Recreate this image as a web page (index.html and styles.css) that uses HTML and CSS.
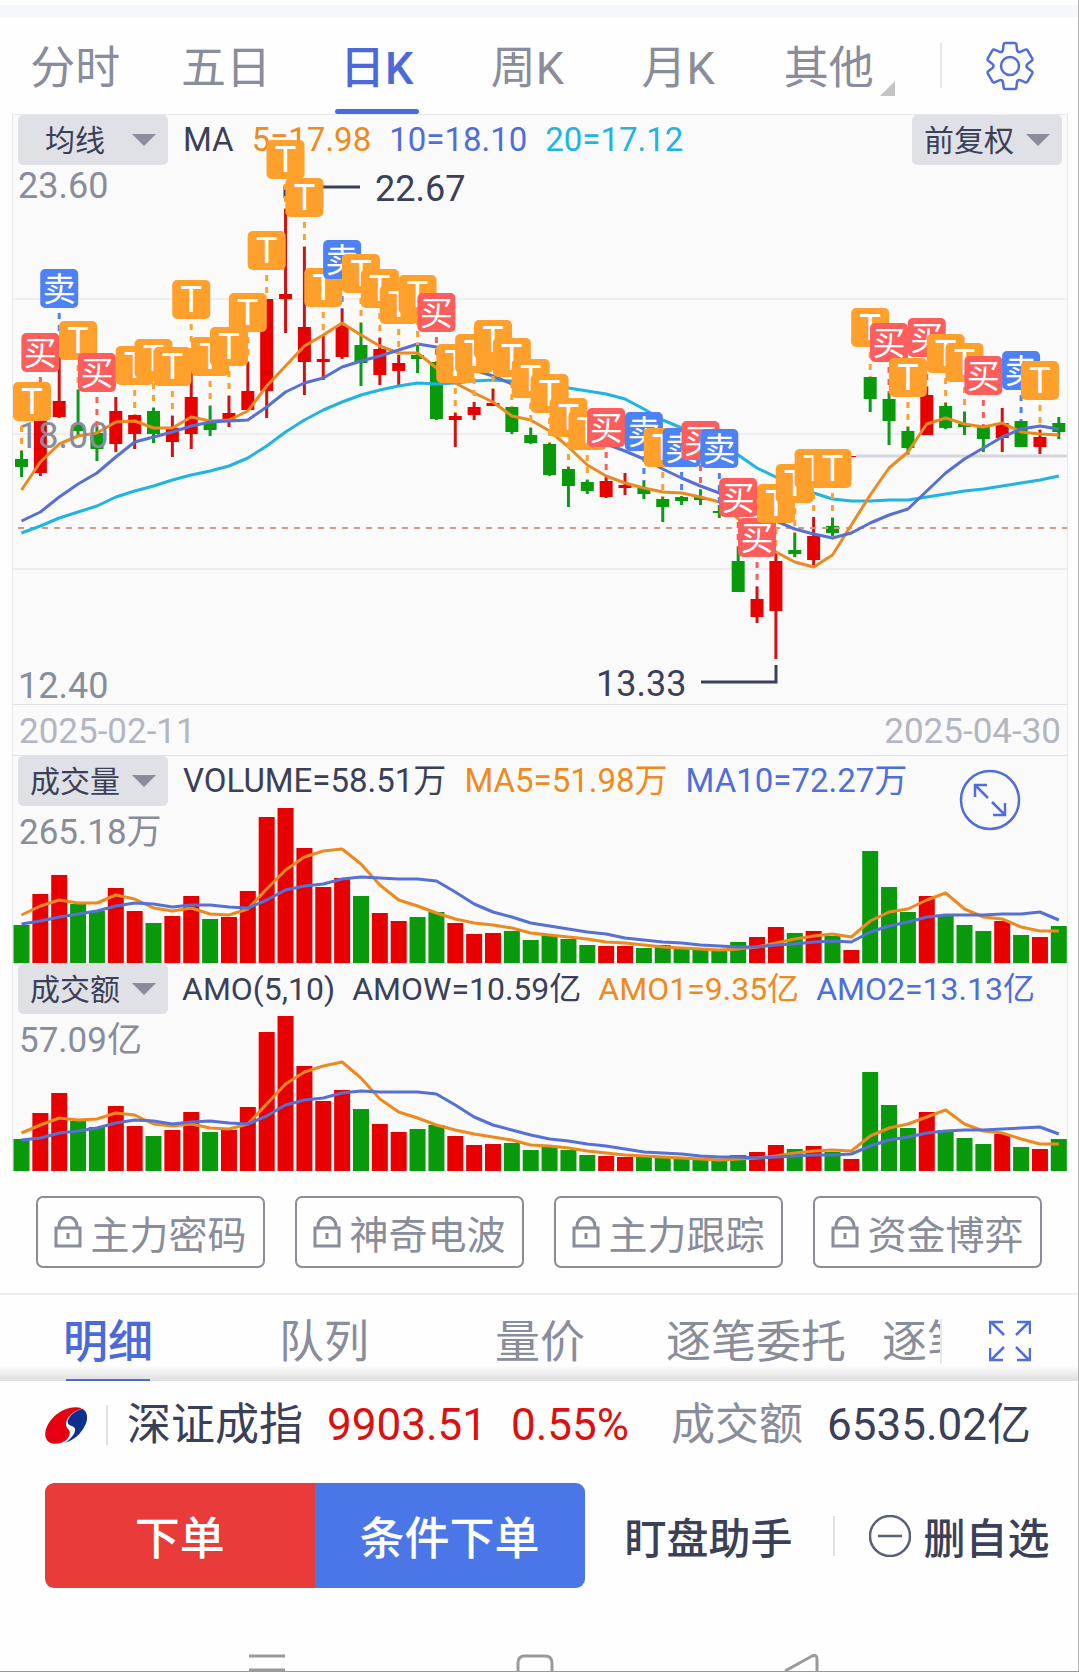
FILE: index.html
```html
<!DOCTYPE html>
<html lang="zh-CN">
<head>
    <meta charset="UTF-8">
    <meta name="viewport" content="width=device-width, initial-scale=1.0">
    <title>日K</title>
    <link rel="stylesheet" href="styles.css">
</head>
<body>
    <div class="strip"></div>

    <!-- 周期切换 -->
    <header class="period-bar">
        <nav class="periods">
            <a href="#" class="period">分时</a>
            <a href="#" class="period">五日</a>
            <a href="#" class="period active">日K</a>
            <a href="#" class="period">周K</a>
            <a href="#" class="period">月K</a>
            <a href="#" class="period more">其他</a>
        </nav>
        <button class="icon-btn" aria-label="设置">
            <svg width="52" height="52" viewBox="-26 -26 52 52" class="line-icon">
                <defs>
                    <path id="tooth" d="M-8.6 -14.2Q-7 -14.8 -7 -16.5L-6.4 -21.5Q-6.2 -23 -4.8 -23H4.8Q6.2 -23 6.4 -21.5L7 -16.5Q7 -14.8 8.6 -14.2"/>
                </defs>
                <use href="#tooth"/>
                <use href="#tooth" transform="rotate(60)"/>
                <use href="#tooth" transform="rotate(120)"/>
                <use href="#tooth" transform="rotate(180)"/>
                <use href="#tooth" transform="rotate(240)"/>
                <use href="#tooth" transform="rotate(300)"/>
                <circle r="9"/>
            </svg>
        </button>
    </header>

    <main class="charts">
        <!-- K线 -->
        <section class="chart">
            <svg id="kline" class="plot" viewBox="13 115 1054 589"></svg>
            <div class="legend">
                <label class="pill">
                    <select aria-label="主图指标"><option>均线</option></select>
                    <span class="arrow"></span>
                </label>
                <span class="dark">MA</span>
                <span class="orange">5=17.98</span>
                <span class="blue">10=18.10</span>
                <span class="cyan">20=17.12</span>
                <label class="pill right">
                    <select aria-label="复权方式"><option>前复权</option></select>
                    <span class="arrow"></span>
                </label>
            </div>
            <svg id="marks" class="plot" viewBox="13 115 1054 589"></svg>
        </section>

        <div class="dates">
            <span>2025-02-11</span>
            <span>2025-04-30</span>
        </div>

        <!-- 成交量 -->
        <section class="chart sub">
            <svg id="volume" class="plot" viewBox="13 0 1054 207"></svg>
            <div class="legend">
                <label class="pill">
                    <select aria-label="副图指标一"><option>成交量</option></select>
                    <span class="arrow"></span>
                </label>
                <span class="dark">VOLUME=58.51万</span>
                <span class="orange">MA5=51.98万</span>
                <span class="blue">MA10=72.27万</span>
            </div>
            <span class="axis-max">265.18万</span>
            <button class="icon-btn expand" aria-label="全屏">
                <svg width="62" height="62" viewBox="0 0 62 62" class="line-icon">
                    <circle cx="31" cy="31" r="29"/>
                    <path d="M16 28V16H28M16 16L29 29M46 34V46H34M46 46L33 33"/>
                </svg>
            </button>
        </section>

        <!-- 成交额 -->
        <section class="chart sub">
            <svg id="amount" class="plot" viewBox="13 0 1054 207"></svg>
            <div class="legend tight">
                <label class="pill">
                    <select aria-label="副图指标二"><option>成交额</option></select>
                    <span class="arrow"></span>
                </label>
                <span class="dark">AMO(5,10)</span>
                <span class="dark">AMOW=10.59亿</span>
                <span class="orange">AMO1=9.35亿</span>
                <span class="blue">AMO2=13.13亿</span>
            </div>
            <span class="axis-max">57.09亿</span>
        </section>
    </main>

    <svg width="0" height="0" class="sprite">
        <symbol id="lock" viewBox="0 0 28 32">
            <path d="M2 12H26V30H2ZM5 12V10A9 9 0 0 1 23 10V12M14 17V23"/>
        </symbol>
    </svg>

    <div class="locks">
        <button class="lock-btn"><svg width="28" height="32"><use href="#lock"/></svg>主力密码</button>
        <button class="lock-btn"><svg width="28" height="32"><use href="#lock"/></svg>神奇电波</button>
        <button class="lock-btn"><svg width="28" height="32"><use href="#lock"/></svg>主力跟踪</button>
        <button class="lock-btn"><svg width="28" height="32"><use href="#lock"/></svg>资金博弈</button>
    </div>

    <!-- 明细 -->
    <div class="detail-bar">
        <nav class="details">
            <a href="#" class="detail active">明细</a>
            <a href="#" class="detail">队列</a>
            <a href="#" class="detail">量价</a>
            <a href="#" class="detail">逐笔委托</a>
            <a href="#" class="detail">逐笔成交</a>
        </nav>
        <button class="icon-btn" aria-label="展开">
            <svg width="42" height="42" viewBox="0 0 42 42" class="line-icon">
                <path d="M1 14V2H14M2 2L15 15M28 2H41V14M40 2L27 15M1 28V40H14M2 40L15 27M28 40H41V28M40 40L27 27"/>
            </svg>
        </button>
    </div>

    <footer class="bottom">
        <div class="index">
            <svg width="42" height="38" viewBox="26 28 124 112" class="logo">
                <path fill="#e60012" d="M133 34C108 26 70 38 46 66C18 98 20 137 54 139C84 140 101 120 99 104C98 94 88 95 88 80C89 61 110 44 133 36Z"/>
                <path fill="#0a2f8f" d="M136 36C152 44 155 66 143 88C132 110 112 128 86 137C104 124 116 108 115 96C113 86 93 87 93 76C93 60 114 42 136 36Z"/>
            </svg>
            <span class="bar"></span>
            <span>深证成指</span>
            <span class="up">9903.51</span>
            <span class="up">0.55%</span>
            <span class="turnover">成交额</span>
            <span>6535.02亿</span>
        </div>

        <div class="actions">
            <div class="trade">
                <button class="btn-order">下单</button>
                <button class="btn-cond">条件下单</button>
            </div>
            <button class="btn-text">盯盘助手</button>
            <span class="bar"></span>
            <button class="btn-text">
                <svg width="42" height="42" viewBox="0 0 42 42">
                    <circle cx="21" cy="21" r="20"/>
                    <path d="M9 21H33"/>
                </svg>
                删自选
            </button>
        </div>
    </footer>

    <!-- 系统导航键 -->
    <div class="sys-nav">
        <svg viewBox="0 0 1078 17">
            <path d="M249 2H285M249 16H285"/>
            <path d="M518 17V9Q518 2 525 2H545Q552 2 552 9V17"/>
            <path d="M785 17L812 2Q817 0 817 5V17"/>
        </svg>
    </div>

    <script src="chart.js"></script>
</body>
</html>
```
FILE: styles.css
```css
* {
    box-sizing: border-box;
}
body {
    margin: 0;
    min-height: 100vh;
    display: flex;
    flex-direction: column;
    border-right: 1px solid #b4b4b8;
    border-bottom: 1px solid #9a9a9a;
    background-color: #fefefe;
    color: #3a4058;
    font-family: Roboto, "Noto Sans CJK SC", sans-serif;
    line-height: 1.2;
}
a {
    color: inherit;
    text-decoration: none;
}
button {
    padding: 0;
    border: none;
    background: none;
    color: inherit;
    font-family: inherit;
    cursor: pointer;
}
svg {
    display: block;
}
.strip {
    height: 12px;
    margin-top: 5px;
    background-color: #f6f7fa;
}
.icon-btn {
    display: flex;
    justify-content: center;
    align-items: center;
}
.line-icon {
    fill: none;
    stroke: #4f6edb;
    stroke-width: 2.5;
}

/* period tabs */
.period-bar {
    display: flex;
    height: 97px;
    align-items: center;
}
.periods {
    flex: 1;
    display: flex;
    height: 100%;
    padding-right: 36px;
}
.period {
    flex: 1;
    display: flex;
    justify-content: center;
    align-items: center;
    position: relative;
    padding-top: 6px;
    color: #888c9b;
    font-size: 45px;
}
.period.active, .detail.active {
    color: #4c69d9;
    font-weight: 500;
}
.period.active::after {
    content: "";
    position: absolute;
    bottom: 0;
    width: 84px;
    height: 5px;
    border-radius: 3px;
    background-color: #4c69d9;
}
.more::after {
    content: "";
    position: absolute;
    right: 9px;
    bottom: 18px;
    border-left: 15px solid transparent;
    border-bottom: 15px solid #c4c4c4;
}
.period-bar .icon-btn {
    width: 138px;
    height: 45px;
    border-left: 2px solid #e6e7eb;
}

/* charts */
.charts {
    margin: 0 10px 0 12px;
    border: 1px solid #e8e9ec;
    border-bottom: none;
    background-color: #fafafa;
}
.chart {
    display: grid;
    grid-template-rows: auto 1fr;
}
.sub {
    border-top: 1px solid #e0e1e5;
    grid-template-rows: auto auto 1fr;
}
.plot {
    grid-area: 1 / 1 / -1 / 2;
    width: 100%;
    height: auto;
    pointer-events: none;
}
.legend {
    grid-area: 1 / 1;
    display: flex;
    align-items: center;
    gap: 18px;
    height: 50px;
    padding: 0 5px 0 5px;
    font-size: 33px;
    white-space: nowrap;
}
.legend.tight {
    gap: 17px;
    font-size: 32px;
}
.pill {
    display: grid;
    align-items: center;
    width: 150px;
    height: 50px;
    margin-right: -3px;
    border-radius: 5px;
    background-color: #e0e1e6;
}
.pill.right {
    margin: 0 0 0 auto;
}
.pill select, .arrow {
    grid-area: 1 / 1;
}
.pill select {
    appearance: none;
    width: 100%;
    height: 50px;
    padding: 0 36px 0 0;
    border: none;
    background: none;
    color: #3a4058;
    font-family: inherit;
    font-size: 30px;
    text-align: center;
    text-align-last: center;
}
.arrow {
    justify-self: end;
    margin-right: 12px;
    border: 12px solid transparent;
    border-top-color: #888c9b;
    border-bottom: none;
    pointer-events: none;
}
.dark {
    color: #3a4058;
}
.orange {
    color: #f08a1c;
}
.blue {
    color: #4f6edb;
}
.cyan {
    color: #1fb4e2;
}
.dates {
    display: flex;
    justify-content: space-between;
    height: 51px;
    padding: 0 6px;
    border-top: 1px solid #e0e1e5;
    color: #b3b6c1;
    font-size: 35px;
    line-height: 54px;
}
.axis-max {
    grid-area: 2 / 1;
    padding-left: 6px;
    color: #888c9b;
    font-size: 35px;
    line-height: 54px;
}
.expand {
    grid-area: 1 / 1 / 3 / 2;
    place-self: start end;
    margin: 13px 46px 0 0;
}

/* svg parts */
.grid-line {
    stroke: #ededf0;
    stroke-width: 2;
}
.ref-line {
    stroke: #d8968b;
    stroke-width: 2;
    stroke-dasharray: 6 6;
}
.flat-line {
    stroke: #d5d6de;
    stroke-width: 3;
}
.up-bar {
    fill: #e80000;
}
.down-bar {
    fill: #089a0b;
}
.up-wick {
    stroke: #cf1212;
    stroke-width: 3;
}
.down-wick {
    stroke: #0a9a1c;
    stroke-width: 3;
}
.ma {
    fill: none;
    stroke-width: 3;
    stroke-linejoin: round;
}
.ma5 {
    stroke: #ee8a1d;
}
.ma10 {
    stroke: #5670d3;
}
.ma20 {
    stroke: #1fb4e2;
}
.axis {
    fill: #888c9b;
    font-size: 36px;
}
.callout {
    fill: #3a4058;
    font-size: 36px;
}
.callout-line {
    fill: none;
    stroke: #3a4058;
    stroke-width: 3;
}
.lead {
    stroke-width: 3;
    stroke-dasharray: 6 6;
}
.badge-text {
    fill: #fff;
    font-size: 36px;
    text-anchor: middle;
}
.badge-text.cn {
    font-size: 33px;
}

/* locked indicators */
.sprite {
    position: absolute;
}
.locks {
    display: grid;
    grid-template-columns: repeat(4, 1fr);
    gap: 30px;
    padding: 25px 36px;
    border-bottom: 2px solid #eeeef0;
}
.lock-btn {
    display: flex;
    justify-content: center;
    align-items: center;
    gap: 8px;
    height: 72px;
    border: 2px solid #888c9b;
    border-radius: 7px;
    color: #888c9b;
    font-size: 39px;
    white-space: nowrap;
}
.lock-btn svg {
    flex: none;
    fill: none;
    stroke: #888c9b;
    stroke-width: 3;
}

/* detail tabs */
.detail-bar {
    display: flex;
    align-items: center;
    height: 86px;
    padding-top: 6px;
    background: linear-gradient(to top, #dedede, #fefefe 16px);
}
.details {
    flex: 1;
    display: flex;
    height: 80px;
    overflow: hidden;
}
.detail {
    flex: 0 0 216px;
    display: flex;
    justify-content: center;
    align-items: center;
    position: relative;
    padding-top: 4px;
    color: #888c9b;
    font-size: 45px;
}
.detail.active::after {
    content: "";
    position: absolute;
    bottom: 0;
    width: 84px;
    height: 2px;
    background-color: #4c69d9;
}
.detail-bar .icon-btn {
    width: 138px;
    height: 45px;
    border-left: 2px solid #e6e7eb;
}

/* index quote and orders */
.bar {
    width: 2px;
    height: 40px;
    background-color: #dfe0e6;
}
.index {
    display: flex;
    align-items: center;
    gap: 24px;
    height: 88px;
    padding-left: 45px;
    font-size: 44px;
    white-space: nowrap;
}
.index .bar {
    margin: 0 -5px;
}
.up {
    color: #dc1010;
}
.turnover {
    margin-left: 18px;
    color: #888c9b;
}
.actions {
    display: flex;
    align-items: center;
    gap: 40px;
    margin-top: 14px;
    padding-left: 45px;
}
.trade {
    display: grid;
    grid-template-columns: 1fr 1fr;
    flex: 0 0 calc(50% + 1px);
    height: 105px;
    border-radius: 9px;
    overflow: hidden;
    color: #fff;
}
.trade {
    flex-basis: calc(50% + 23px);
}
.trade button {
    font-size: 45px;
    font-weight: 500;
}
.btn-order {
    background-color: #e83b3a;
}
.btn-cond {
    background-color: #4a76e8;
}
.btn-text {
    display: flex;
    align-items: center;
    gap: 13px;
    font-size: 42px;
    font-weight: 500;
    white-space: nowrap;
}
.actions .bar + .btn-text {
    margin-left: -6px;
}
.btn-text svg {
    fill: none;
    stroke: #5a6078;
    stroke-width: 2.5;
}
.sys-nav {
    margin-top: auto;
}
.sys-nav svg {
    width: 100%;
    fill: none;
    stroke: #9a9a9a;
    stroke-width: 3;
}
```
FILE: chart.js
```javascript
const NS = 'http://www.w3.org/2000/svg';
const FIRST = 21.5;
const STEP = 18.86;

// u = 涨, d = 跌 : [方向, 最高, 实体上沿, 实体下沿, 最低]
const candles = [
    ['d', 451, 459, 467, 477], ['u', 415, 416, 473, 476], ['u', 357, 401, 417, 418], ['d', 390, 425, 431, 436],
    ['d', 427, 433, 449, 461], ['u', 397, 411, 444, 452], ['u', 415, 415, 434, 449], ['d', 408, 411, 434, 443],
    ['u', 416, 428, 442, 457], ['u', 370, 397, 434, 449], ['d', 406, 422, 430, 436], ['u', 396, 413, 422, 427],
    ['u', 362, 391, 410, 410], ['u', 299, 299, 391, 418], ['u', 209, 294, 299, 333], ['u', 247, 327, 362, 395],
    ['u', 335, 359, 362, 380], ['u', 309, 326, 357, 359], ['d', 323, 345, 363, 386], ['u', 338, 349, 375, 385],
    ['u', 355, 363, 371, 385], ['d', 345, 355, 359, 373], ['d', 362, 362, 419, 420], ['u', 413, 416, 420, 447],
    ['u', 402, 407, 415, 420], ['u', 389, 403, 406, 406], ['d', 407, 407, 432, 434], ['d', 428, 435, 443, 444],
    ['d', 443, 444, 475, 476], ['d', 467, 469, 486, 507], ['d', 480, 482, 491, 494], ['u', 477, 481, 497, 498],
    ['u', 473, 485, 488, 495], ['d', 481, 488, 494, 499], ['d', 497, 499, 507, 522], ['d', 496, 497, 501, 505],
    ['d', 490, 497, 500, 505], ['d', 505, 511, 513, 518], ['d', 547, 561, 592, 592], ['u', 587, 599, 617, 623],
    ['u', 553, 561, 611, 659], ['d', 533, 550, 554, 557], ['u', 517, 536, 560, 565], ['d', 518, 526, 533, 536],
    ['u', 456, 456, 457, 457], ['d', 377, 377, 399, 412], ['d', 393, 399, 421, 445], ['d', 427, 431, 448, 455],
    ['u', 387, 395, 435, 435], ['d', 403, 406, 428, 429], ['d', 412, 424, 427, 435], ['d', 425, 427, 439, 452],
    ['u', 408, 423, 438, 452], ['d', 421, 421, 447, 447], ['u', 430, 437, 447, 454], ['d', 417, 423, 432, 439]
];

const ma5 = [490, 462, 444, 436, 433, 422, 421, 428, 428, 417, 421, 420, 411, 386, 366, 346, 335, 323, 335, 346, 353, 353,
    368, 383, 393, 402, 416, 420, 431, 447, 465, 476, 483, 488, 492, 493, 497, 502, 519, 537, 552, 562, 567, 555, 525, 495,
    468, 452, 424, 418, 424, 427, 423, 432, 434, 435];
const ma10 = [521, 512, 497, 484, 473, 457, 442, 437, 432, 426, 422, 421, 420, 407, 392, 383, 378, 367, 361, 356, 350, 344,
    347, 357, 370, 376, 384, 395, 408, 420, 432, 444, 451, 459, 469, 478, 486, 493, 505, 514, 521, 529, 534, 538, 533, 523,
    515, 509, 491, 473, 459, 448, 437, 429, 426, 429];
const ma20 = [533, 526, 518, 512, 506, 497, 491, 486, 480, 475, 471, 466, 458, 446, 432, 420, 410, 402, 395, 390, 386, 383,
    384, 383, 381, 380, 381, 383, 385, 388, 391, 394, 399, 409, 420, 428, 437, 447, 455, 468, 477, 485, 493, 499, 501, 501,
    500, 500, 497, 494, 491, 489, 486, 483, 480, 476];

// 买卖点: [序号, 类型, 上沿]
const badges = [
    [0, 'T', 382], [1, '买', 333], [2, '卖', 269], [3, 'T', 321], [4, '买', 353], [6, 'T', 346], [7, 'T', 339], [8, 'T', 347],
    [9, 'T', 280], [10, 'T', 337], [11, 'T', 327], [12, 'T', 293], [13, 'T', 231], [14, 'T', 140], [15, 'T', 178],
    [16, 'T', 268], [17, '卖', 240], [18, 'T', 254], [19, 'T', 269], [20, 'T', 285], [21, 'T', 275], [22, '买', 293],
    [23, 'T', 344], [24, 'T', 334], [25, 'T', 320], [26, 'T', 338], [27, 'T', 359], [28, 'T', 374], [29, 'T', 398],
    [30, 'T', 411], [31, '买', 408], [33, '卖', 412], [34, 'T', 428], [35, '卖', 428], [36, '买', 421], [37, '卖', 429],
    [38, '买', 478], [39, '买', 518], [40, 'T', 484], [41, 'T', 464], [42, 'T', 449], [43, 'T', 449], [45, 'T', 308],
    [46, '买', 323], [47, 'T', 358], [48, '买', 318], [49, 'T', 334], [50, 'T', 343], [51, '买', 356], [53, '卖', 351],
    [54, 'T', 361]
];
const badgeColors = { 'T': '#ffa02c', '买': '#fc5d5d', '卖': '#4c82f4' };

const volume = {
    bars: [38, 69, 88, 59, 52, 75, 52, 40, 47, 67, 44, 46, 72, 146, 155, 115, 76, 85, 67, 50, 42, 46, 51, 40, 29, 30, 32, 23,
        28, 24, 18, 17, 17, 15, 18, 14, 13, 13, 21, 26, 36, 30, 32, 27, 13, 112, 76, 51, 67, 47, 38, 32, 42, 28, 26, 37],
    ma5: [48, 57, 63, 60, 60, 68, 64, 55, 52, 55, 49, 48, 54, 74, 93, 106, 112, 114, 99, 78, 63, 57, 50, 44, 40, 38, 35, 30,
        28, 26, 24, 21, 20, 18, 16, 15, 14, 13, 14, 16, 20, 24, 27, 29, 26, 42, 51, 54, 63, 70, 54, 46, 44, 36, 32, 32],
    ma10: [39, 42, 46, 49, 52, 57, 60, 59, 56, 58, 58, 56, 55, 63, 73, 77, 79, 84, 86, 85, 84, 84, 82, 71, 59, 51, 46, 40,
        37, 34, 31, 29, 25, 23, 21, 20, 18, 17, 16, 16, 18, 19, 21, 22, 21, 31, 37, 41, 46, 48, 48, 48, 49, 49, 51, 43]
};
const amount = {
    bars: [32, 58, 78, 50, 44, 65, 45, 35, 41, 59, 39, 41, 64, 139, 155, 105, 70, 81, 62, 47, 39, 42, 46, 35, 26, 27, 28, 21,
        24, 21, 16, 15, 14, 14, 14, 12, 11, 11, 16, 19, 26, 22, 25, 19, 12, 99, 66, 43, 59, 41, 33, 27, 37, 24, 22, 32],
    ma5: [38, 46, 53, 51, 52, 58, 56, 47, 45, 47, 43, 42, 47, 67, 87, 99, 105, 109, 93, 72, 59, 53, 46, 41, 37, 34, 31, 26,
        25, 23, 20, 18, 16, 15, 14, 13, 12, 11, 12, 13, 15, 18, 20, 21, 20, 35, 43, 47, 54, 61, 47, 40, 38, 32, 27, 27],
    ma10: [31, 33, 38, 40, 43, 48, 51, 50, 47, 49, 50, 48, 47, 55, 66, 71, 73, 78, 80, 79, 79, 79, 77, 66, 54, 46, 41, 36,
        32, 30, 27, 25, 22, 19, 18, 17, 15, 14, 14, 13, 14, 15, 16, 16, 17, 25, 31, 34, 38, 40, 41, 41, 42, 43, 44, 37]
};

function add(parent, tag, attrs, text) {
    const el = document.createElementNS(NS, tag);
    for (const key in attrs) el.setAttribute(key, attrs[key]);
    if (text) el.textContent = text;
    parent.appendChild(el);
    return el;
}

function xOf(i) {
    return FIRST + STEP * i;
}

function line(parent, x1, y1, x2, y2, cls) {
    return add(parent, 'line', { x1, y1, x2, y2, class: cls });
}

function curve(parent, ys, cls) {
    add(parent, 'polyline', { points: ys.map((y, i) => xOf(i) + ',' + y).join(' '), class: 'ma ' + cls });
}

function drawKline() {
    const svg = document.getElementById('kline');
    [299, 434, 569].forEach(y => line(svg, 13, y, 1067, y, 'grid-line'));

    candles.forEach(([dir, high, top, bottom, low], i) => {
        const name = dir === 'u' ? 'up' : 'down';
        line(svg, xOf(i), high, xOf(i), low, name + '-wick');
        add(svg, 'rect', { x: xOf(i) - 6.5, y: top, width: 13, height: bottom - top, class: name + '-bar' });
    });
    line(svg, 856, 456, 1067, 456, 'flat-line');
    line(svg, 18, 528, 1067, 528, 'ref-line');
    curve(svg, ma20, 'ma20');
    curve(svg, ma5, 'ma5');
    curve(svg, ma10, 'ma10');

    add(svg, 'text', { x: 18, y: 198, class: 'axis' }, '23.60');
    add(svg, 'text', { x: 18, y: 448, class: 'axis' }, '18.00');
    add(svg, 'text', { x: 18, y: 698, class: 'axis' }, '12.40');
    add(svg, 'text', { x: 375, y: 201, class: 'callout' }, '22.67');
    add(svg, 'text', { x: 596, y: 696, class: 'callout' }, '13.33');
    add(svg, 'path', { d: 'M285 198V187H360', class: 'callout-line' });
    add(svg, 'path', { d: 'M701 682H776V665', class: 'callout-line' });
}

function drawBadges() {
    const svg = document.getElementById('marks');
    badges.forEach(([i, type, top]) => {
        const end = candles[i][1];
        if (end > top + 45) {
            add(svg, 'line', { x1: xOf(i), y1: top + 44, x2: xOf(i), y2: end, class: 'lead', stroke: badgeColors[type] });
        }
    });
    badges.forEach(([i, type, top]) => {
        const x = Math.max(xOf(i), 32);
        add(svg, 'rect', { x: x - 19, y: top, width: 38, height: 39, rx: 5, fill: badgeColors[type] });
        add(svg, 'text', {
            x, y: top + 32, class: type === 'T' ? 'badge-text' : 'badge-text cn'
        }, type);
    });
}

function drawSub(id, data) {
    const svg = document.getElementById(id);
    data.bars.forEach((h, i) => {
        const name = candles[i][0] === 'u' ? 'up' : 'down';
        add(svg, 'rect', { x: xOf(i) - 8, y: 207 - h, width: 16, height: h, class: name + '-bar' });
    });
    curve(svg, data.ma5.map(h => 207 - h), 'ma5');
    curve(svg, data.ma10.map(h => 207 - h), 'ma10');
}

drawKline();
drawBadges();
drawSub('volume', volume);
drawSub('amount', amount);
```
